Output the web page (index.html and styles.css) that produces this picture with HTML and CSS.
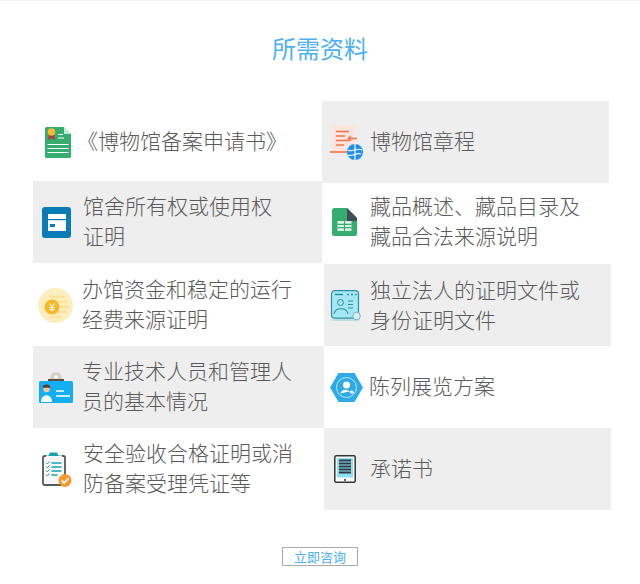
FILE: index.html
```html
<!DOCTYPE html>
<html lang="zh-CN">
<head>
<meta charset="utf-8">
<title>所需资料</title>
<link rel="stylesheet" href="styles.css">
</head>
<body>
<main class="page">
  <h1 class="title">所需资料</h1>
  <div class="columns">
    <div class="col col-left">
      <div class="cell cell-first">
        <svg class="icon i-doc" viewBox="0 0 26 31"><path d="M1.500 0h17L26 7v22.500a1.500 1.500 0 0 1-1.500 1.500h-23A1.500 1.500 0 0 1 0 29.500v-28A1.500 1.500 0 0 1 1.500 0z" fill="#35ad6e"/><path d="M19 0l7 7h-7z" fill="#c4ead6"/><path d="M3.800 6l-.6 7.500 3.300-2.500 3.300 2.500L9.200 6z" fill="#b23a3a"/><circle cx="6.500" cy="5" r="3.800" fill="#f7b733"/><path d="M13 7.500h5M13 11h6M2.500 17.500h21M2.500 21.500h21M2.500 25.500h21" stroke="#fff" stroke-width="1.200"/></svg>
        <p class="label">《博物馆备案申请书》</p>
      </div>
      <div class="cell shade">
        <svg class="icon i-box" viewBox="0 0 29 31"><rect width="29" height="31" rx="3" fill="#0a7cb5"/><rect x="6" y="7" width="18" height="17" fill="#fff"/><rect x="6" y="12" width="18" height="1.200" fill="#0a7cb5"/><rect x="8" y="17" width="5" height="3" fill="#0a7cb5"/></svg>
        <p class="label">馆舍所有权或使用权<br>证明</p>
      </div>
      <div class="cell cell-tall">
        <svg class="icon i-coin" viewBox="0 0 35 35"><circle cx="17.500" cy="17.500" r="17.500" fill="#fdeec0"/><path d="M11 9h16M11 14h19M11 19h20M11 24h18M11 29h12" stroke="#fde29a" stroke-width="2.400"/><circle cx="14" cy="19" r="7.500" fill="#f3b92b"/><path d="M11.500 15.500L14 19l2.500-3.500M14 19v4.500M11.500 19.500h5M11.500 21.500h5" stroke="#fff" stroke-width="1" fill="none"/></svg>
        <p class="label">办馆资金和稳定的运行<br>经费来源证明</p>
      </div>
      <div class="cell shade cell-wide">
        <svg class="icon i-id" viewBox="0 0 34 31"><path d="M11 6a6 6 0 0 1 12 0v3H11z" fill="#d9d2c8"/><circle cx="17" cy="5" r="1.600" fill="#fff"/><rect x="9" y="7" width="16" height="2" fill="#5b4a42"/><rect y="9" width="34" height="22" rx="1.500" fill="#16aef2"/><circle cx="7.500" cy="17" r="3.200" fill="#f0c7a4"/><path d="M7.500 12.500a3.800 3.200 0 0 1 3.800 3.200H3.700a3.800 3.200 0 0 1 3.800-3.200z" fill="#5b3a29"/><path d="M2 30c0-9 11-9 11 0z" fill="#f4fafd"/><path d="M17 19h8M17 24h14" stroke="#fff" stroke-width="1.500"/></svg>
        <p class="label">专业技术人员和管理人<br>员的基本情况</p>
      </div>
      <div class="cell">
        <svg class="icon i-clip" viewBox="0 0 30 35"><path d="M8 .500h7l1.500 3H20v3H3v-3h3.500z" fill="#16a2ad"/><path d="M4 4H2.500A1.500 1.500 0 0 0 1 5.500v26A1.500 1.500 0 0 0 2.500 33h19a1.500 1.500 0 0 0 1.500-1.500v-26A1.500 1.500 0 0 0 21.500 4H20" fill="#f7f7f7" stroke="#55595c" stroke-width="1.800"/><path d="M9.500 11h10M9.500 15h10M9.500 19h10M9.500 23h6" stroke="#13a5b8" stroke-width="1.500"/><path d="M4 10.500l1.300 1.300L7.500 9.500M4 14.500l1.300 1.300 2.200-2.300M4 18.500l1.300 1.300 2.200-2.300M4 22.500l1.300 1.300 2.200-2.300" stroke="#2b8f9b" fill="none"/><circle cx="23" cy="28.500" r="6.500" fill="#f79a2b"/><path d="M19.800 28.500l2.400 2.400 4.200-4.400" stroke="#fff" stroke-width="1.800" fill="none"/></svg>
        <p class="label">安全验收合格证明或消<br>防备案受理凭证等</p>
      </div>
    </div>
    <div class="col col-right">
      <div class="cell shade cell-top">
        <svg class="icon i-globe" viewBox="0 0 33 35"><rect x="2" width="23" height="26" fill="#fde4dc"/><path d="M6 6.500h13M6 11h9M6 15.500h13M6 20h8" stroke="#f5704a" stroke-width="1.700"/><path d="M0 27h18" stroke="#f58a66" stroke-width="2"/><path d="M18 13.500h9M18 13.500l3-2.500M18 13.500l3 2.500" stroke="#f5704a" stroke-width="1.300" fill="none"/><circle cx="25" cy="27" r="8" fill="#1e90f0"/><path d="M18 25c4 3 9-3 14 0M18 30c4 2 9-3 13-1M25 19v16" stroke="#fff" stroke-width="1.200" fill="none"/></svg>
        <p class="label">博物馆章程</p>
      </div>
      <div class="cell cell-lift">
        <svg class="icon i-sheet" viewBox="0 0 25 28"><path d="M2.500 0H15l10 10v15.500a2.500 2.500 0 0 1-2.500 2.500h-20A2.500 2.500 0 0 1 0 25.500v-23A2.500 2.500 0 0 1 2.500 0z" fill="#35ad6e"/><path d="M15 0l10 10v3H15z" fill="#3f4d5a"/><rect x="5.500" y="13" width="14" height="10" fill="#d8f2e4"/><path d="M5.500 16.300h14M5.500 19.700h14M12.500 13v10" stroke="#35ad6e" stroke-width="1.200"/></svg>
        <p class="label">藏品概述、藏品目录及<br>藏品合法来源说明</p>
      </div>
      <div class="cell shade cell-shift cell-low">
        <svg class="icon i-card" viewBox="0 0 31 31"><ellipse cx="15" cy="30" rx="15" ry="1" fill="#b5dde4"/><rect x="1.500" y=".700" width="27" height="27.500" rx="3" fill="#a6e7f6" stroke="#2a8fa5" stroke-width="1.200"/><path d="M5 4.500h8M17 4.500h2M21 4.500h2M25 4.500h1.500" stroke="#2a8fa5" stroke-width="1.500"/><circle cx="10.500" cy="12.500" r="3" fill="none" stroke="#2a8fa5"/><path d="M4 24c1-7 13-7 14 0M18 11h5M18 14.500h5M18 18h5" fill="none" stroke="#2a8fa5" stroke-width="1.100"/><circle cx="26.500" cy="26" r="3.800" fill="#d8eef2" stroke="#76b5c3"/></svg>
        <p class="label">独立法人的证明文件或<br>身份证明文件</p>
      </div>
      <div class="cell cell-shift">
        <svg class="icon i-hex" viewBox="0 0 33 29"><path d="M8.500 0h16L33 14.500 24.500 29h-16L0 14.500z" fill="#2eaae6"/><circle cx="16.500" cy="14.500" r="10" fill="none" stroke="#bfe6f8"/><circle cx="16.500" cy="12" r="3.500" fill="#fff"/><path d="M10.500 20.500c1-5 9-5 10 0h3a2 2 0 0 0-3-2.500" fill="#fff"/></svg>
        <p class="label">陈列展览方案</p>
      </div>
      <div class="cell shade cell-shift">
        <svg class="icon i-tablet" viewBox="0 0 22 28"><rect x=".800" y=".800" width="20.400" height="26.400" rx="1.500" fill="#fff" stroke="#333" stroke-width="1.500"/><rect x="3" y="3" width="16" height="19.500" fill="#8fe0f7"/><path d="M5 5.500h12M5 8.500h12M5 11.500h12M5 14.500h12M5 17.500h12" stroke="#2f3c44" stroke-width="1.800"/><circle cx="11" cy="25" r="1" fill="#333"/></svg>
        <p class="label">承诺书</p>
      </div>
    </div>
  </div>
  <a class="consult" href="#">立即咨询</a>
</main>
</body>
</html>
```

FILE: styles.css
```css
* { box-sizing: border-box; }
html, body { margin: 0; padding: 0; background: #fff; }
body { height: 584px; overflow: hidden; font-family: "Noto Sans CJK SC", "Liberation Sans", sans-serif; }
.page { display: flex; flex-direction: column; align-items: center; border-top: 1px solid #f1f5fa; height: 584px; }
.title { margin: 30px 0 0; height: 34px; font-size: 24px; line-height: 34px; font-weight: 400; color: #4db0f5; }
.columns { align-self: flex-start; display: flex; margin: 36px 0 0 33px; }
.col { display: flex; flex-direction: column; }
.col-left { width: 289px; }
.col-right { width: 289px; }
.cell { display: flex; align-items: center; height: 82px; }
.shade { background: #eee; }
.cell-first { margin-bottom: -2px; }
.cell-tall { height: 83px; padding-top: 1px; }
.cell-wide { margin-right: -2px; }
.cell-top { width: 287px; }
.cell-lift { height: 81px; padding-bottom: 3px; }
.cell-shift { width: 287px; margin-left: 2px; }
.cell-low { padding-top: 1px; }
.icon { flex: none; }
.i-doc { width: 26px; height: 31px; margin: 0 6px 0 12px; }
.i-box { width: 29px; height: 31px; margin: 0 12px 0 9px; }
.i-coin { width: 35px; height: 35px; margin: 0 9px 0 5px; }
.i-id { width: 34px; height: 31px; margin: 0 9px 0 6px; }
.i-clip { width: 30px; height: 35px; margin: 0 11px 0 9px; }
.i-globe { width: 33px; height: 35px; margin: 0 7px 0 8px; }
.i-sheet { width: 25px; height: 28px; margin: 0 13px 0 10px; }
.i-card { width: 31px; height: 31px; margin: 0 9px 0 6px; }
.i-hex { width: 33px; height: 29px; margin: 0 6px 0 6px; }
.i-tablet { width: 22px; height: 28px; margin: 0 14px 0 10px; }
.label { margin: 0; padding-bottom: 4px; font-size: 21px; line-height: 30px; font-weight: 300; color: #5a5a5a; white-space: nowrap; }
.consult { margin-top: 37px; width: 76px; height: 19px; border: 1px solid #aaa; color: #4db0f2; font-size: 13px; line-height: 17px; text-align: center; text-decoration: none; }
```
